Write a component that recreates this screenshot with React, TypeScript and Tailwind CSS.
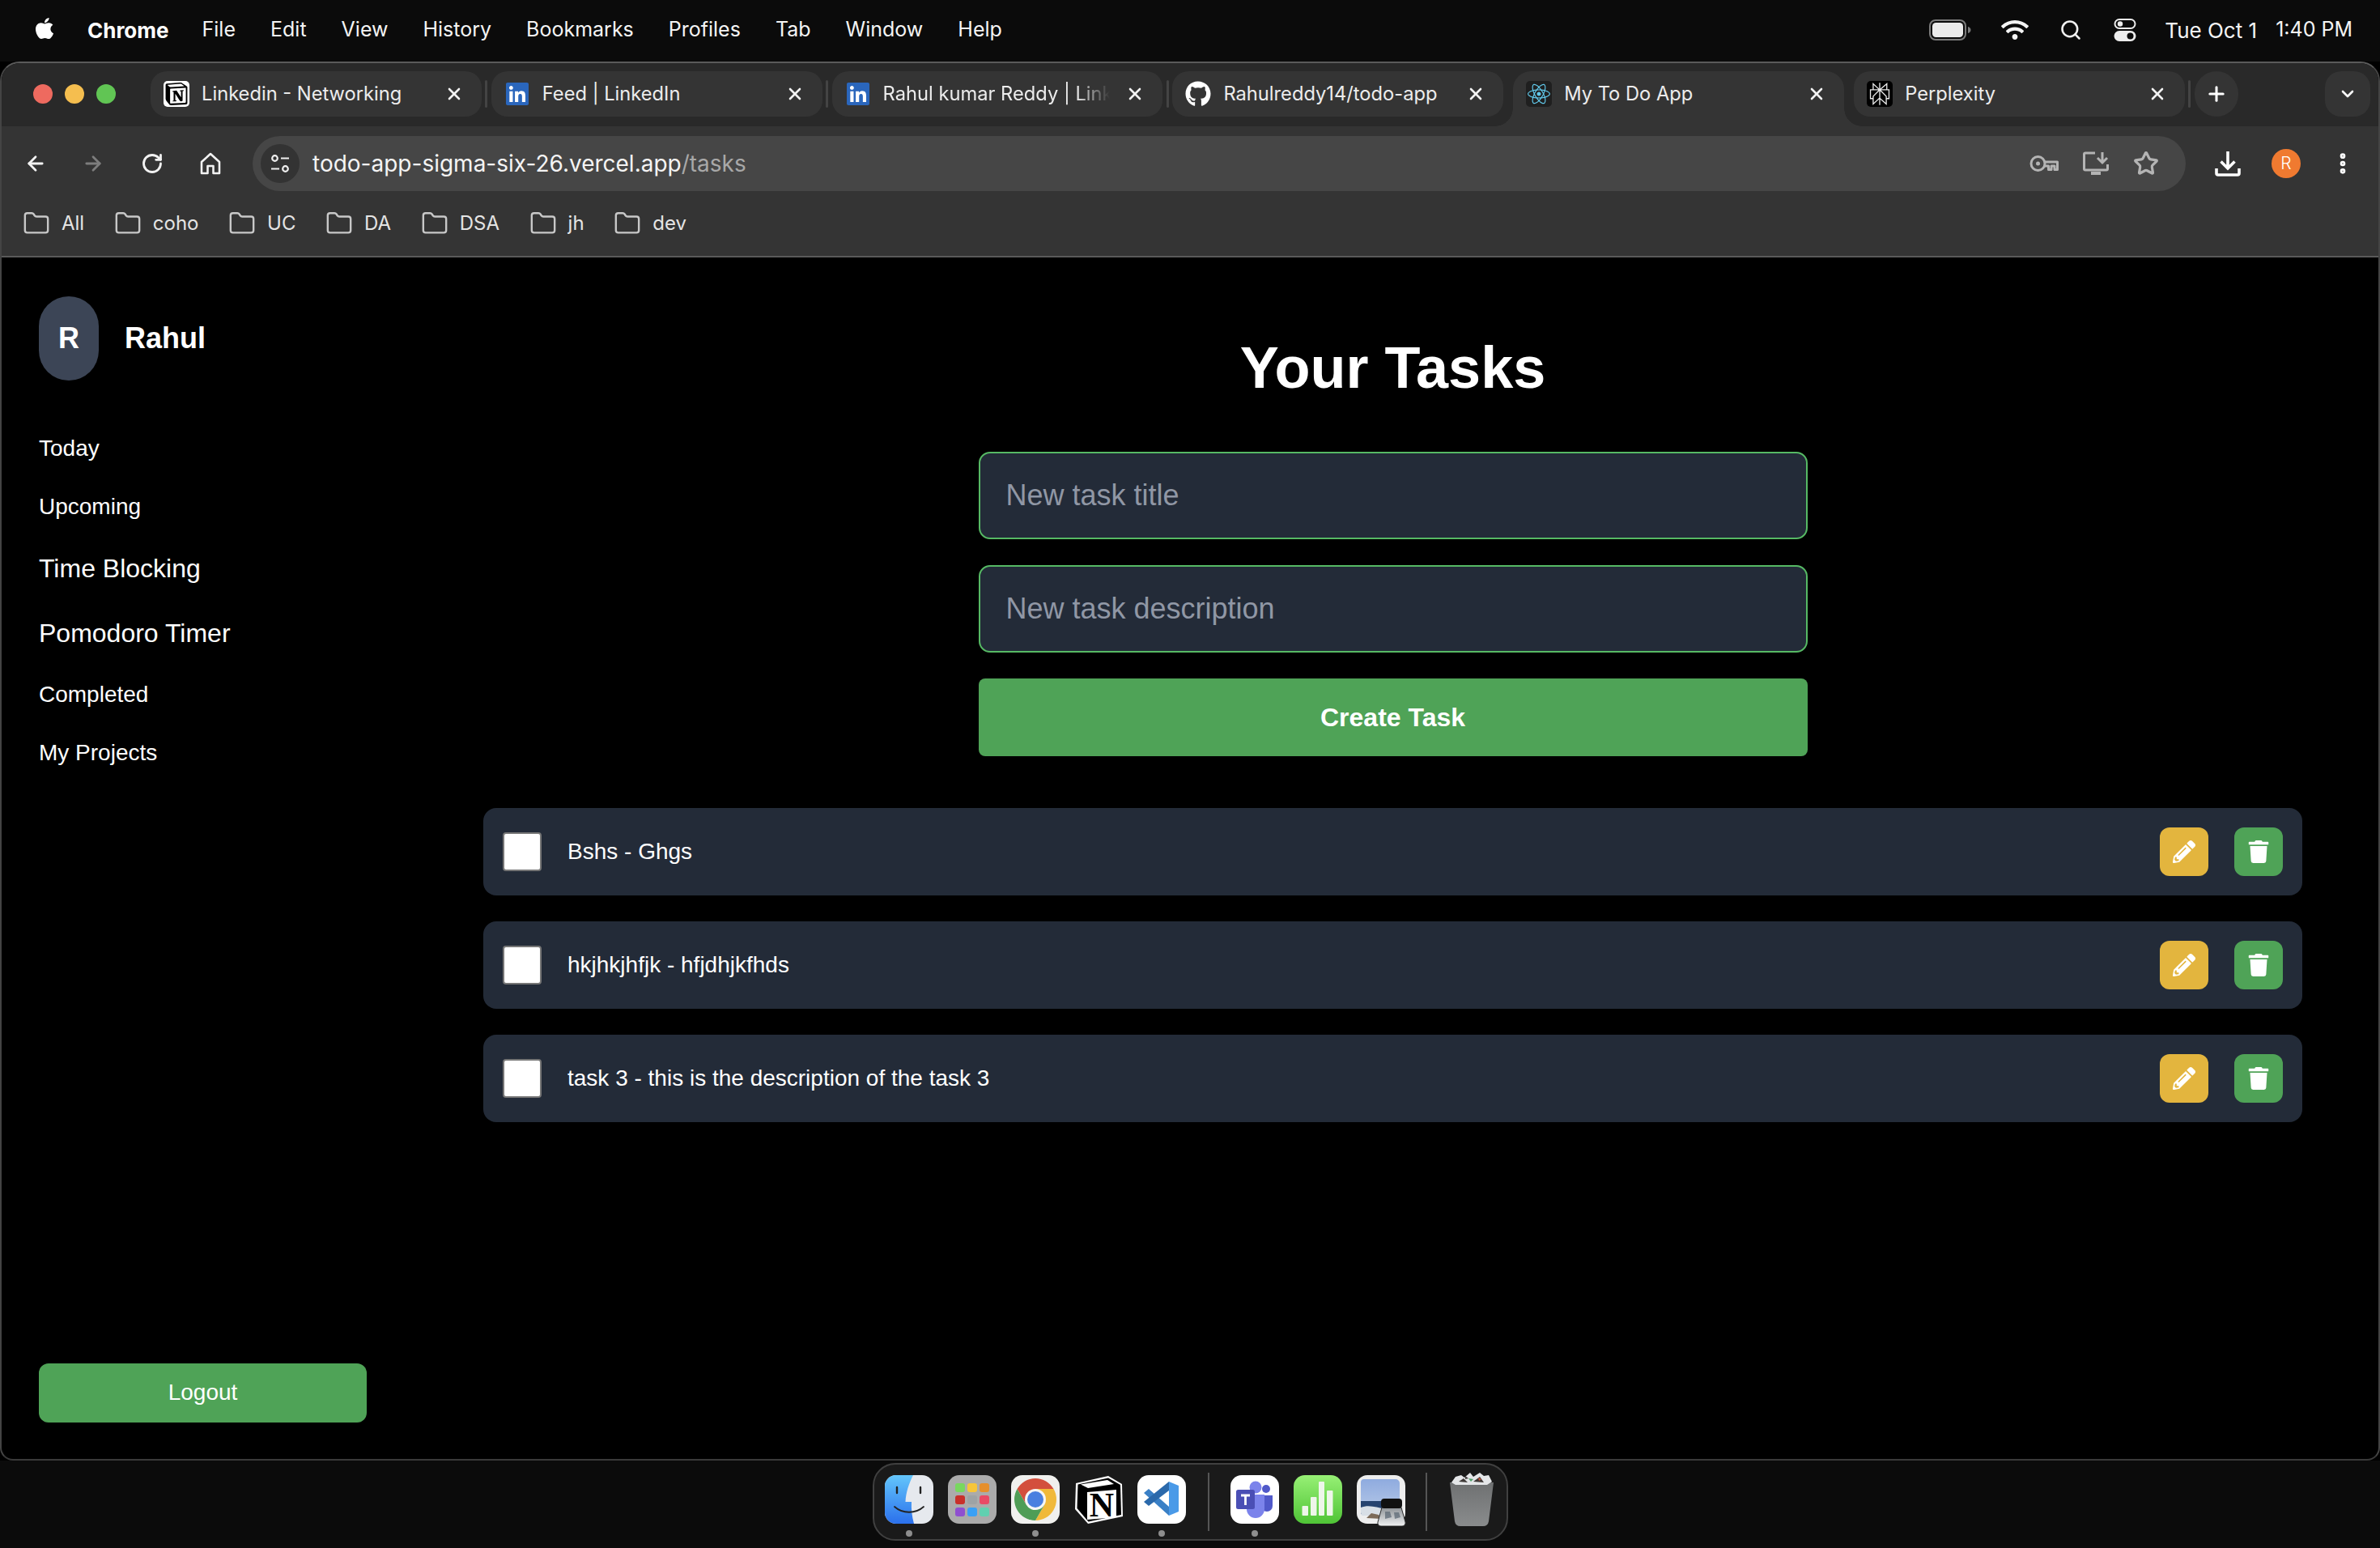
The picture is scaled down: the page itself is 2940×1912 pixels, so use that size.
import type { ReactNode } from 'react'
import {
  ArrowLeft,
  ArrowRight,
  ChevronDown,
  EllipsisVertical,
  Folder,
  Plus,
  RotateCw,
  Search,
  Star,
  X,
} from 'lucide-react'
import { FaApple, FaGithub, FaLinkedin, FaPencilAlt, FaReact, FaTrash, FaWifi } from 'react-icons/fa'
import { SiNotion, SiPerplexity } from 'react-icons/si'

const menuItems = ['File', 'Edit', 'View', 'History', 'Bookmarks', 'Profiles', 'Tab', 'Window', 'Help']
const bookmarks = ['All', 'coho', 'UC', 'DA', 'DSA', 'jh', 'dev']
const tasks = ['Bshs - Ghgs', 'hkjhkjhfjk - hfjdhjkfhds', 'task 3 - this is the description of the task 3']

function LinkedinIcon() {
  return (
    <div className="relative flex size-8 items-center justify-center">
      <div className="absolute size-6 bg-white" />
      <FaLinkedin className="relative size-8 text-[#2a66bc]" />
    </div>
  )
}

function Tab({ icon, title, fade }: { icon: ReactNode; title: string; fade?: boolean }) {
  return (
    <div className="flex h-14 w-[408.8px] shrink-0 items-center rounded-[20px] bg-[#343434] pl-4 pr-[22px]">
      <div className="flex size-8 shrink-0 items-center justify-center">{icon}</div>
      <span
        className={
          fade
            ? 'ml-[15px] w-[280px] overflow-hidden whitespace-nowrap text-[23.7px] text-[#ececec] [mask-image:linear-gradient(to_right,black_85%,transparent)]'
            : 'ml-[15px] w-[280px] overflow-hidden whitespace-nowrap text-[23.7px] text-[#ececec]'
        }
      >
        {title}
      </span>
      <X className="ml-auto size-6 shrink-0 text-[#f2f2f2]" strokeWidth={2.6} />
    </div>
  )
}

function TabSeparator({ show = true }: { show?: boolean }) {
  return (
    <div className="flex h-14 w-3 shrink-0 items-center justify-center">
      {show && <div className="h-[34px] w-[3px] rounded-full bg-[#444444]" />}
    </div>
  )
}

function ActiveTab() {
  return (
    <div className="relative flex h-[68px] w-[409px] shrink-0 items-start rounded-t-[22px] bg-[#343434] pl-[16px] pr-[22px] pt-3">
      <div className="absolute bottom-0 -left-[22px] size-[22px] bg-[radial-gradient(circle_at_0_0,transparent_21.5px,#343434_22px)]" />
      <div className="absolute bottom-0 -right-[22px] size-[22px] bg-[radial-gradient(circle_at_100%_0,transparent_21.5px,#343434_22px)]" />
      <div className="flex size-8 shrink-0 items-center justify-center rounded-[5px] bg-[#1f1f1f]">
        <FaReact className="size-7 text-[#61c8ea]" />
      </div>
      <span className="ml-[15px] whitespace-nowrap text-[23.7px] leading-8 text-[#ececec]">My To Do App</span>
      <X className="ml-auto mt-1 size-6 shrink-0 text-[#f2f2f2]" strokeWidth={2.6} />
    </div>
  )
}

function MenuBar() {
  return (
    <div className="flex h-[76px] shrink-0 items-center bg-[#0b0b0b] pb-[2px] pl-[40px] pr-[34px] text-[25px] text-[#f4f4f4]">
      <FaApple className="mb-1 size-[30px] text-white" />
      <span className="ml-[38px] text-[26px] font-bold text-white">Chrome</span>
      <div className="ml-[41px] flex gap-[43px]">
        {menuItems.map((item) => (
          <span key={item}>{item}</span>
        ))}
      </div>
      <div className="ml-auto flex items-center">
        <svg width="52" height="26" viewBox="0 0 52 26">
          <rect x="1" y="1" width="44" height="24" rx="7" fill="none" stroke="#7b7b7b" strokeWidth="2" />
          <rect x="4" y="4" width="38" height="18" rx="4.5" fill="#ebebeb" />
          <path d="M48 9c2 .6 3.5 2 3.5 4s-1.500 3.400-3.500 4z" fill="#7b7b7b" />
        </svg>
        <FaWifi className="ml-[37px] size-[34px] text-[#f4f4f4]" />
        <Search className="ml-[38px] size-[28px] text-[#f0f0f0]" strokeWidth={2.2} />
        <svg className="ml-[39px]" width="28" height="28" viewBox="0 0 28 28">
          <rect x="1.500" y="1" width="25" height="11" rx="5.500" fill="none" stroke="#ededed" strokeWidth="2" />
          <circle cx="8" cy="6.500" r="3.200" fill="#ededed" />
          <rect x="0.500" y="15" width="27" height="13" rx="6.500" fill="#ededed" />
          <circle cx="20.500" cy="21.500" r="4" fill="#0b0b0b" />
        </svg>
        <span className="ml-[35px] text-[26px]">Tue Oct 1</span>
        <span className="ml-[23px]">1:40 PM</span>
      </div>
    </div>
  )
}

function TabStrip() {
  return (
    <div className="flex h-[78px] shrink-0 items-start bg-[#292929] pt-[10px]">
      <div className="ml-[39px] flex h-14 w-[145px] shrink-0 items-center gap-[15px]">
        <div className="size-6 rounded-full bg-[#ee6a5f]" />
        <div className="size-6 rounded-full bg-[#f5be4f]" />
        <div className="size-6 rounded-full bg-[#61c554]" />
      </div>
      <Tab
        title="Linkedin - Networking"
        icon={
          <div className="flex size-8 items-center justify-center rounded-[5px] bg-white">
            <SiNotion className="size-7 text-black" />
          </div>
        }
      />
      <TabSeparator />
      <Tab title="Feed | LinkedIn" icon={<LinkedinIcon />} />
      <TabSeparator />
      <Tab title="Rahul kumar Reddy | LinkedIn" fade icon={<LinkedinIcon />} />
      <TabSeparator />
      <Tab title="Rahulreddy14/todo-app" icon={<FaGithub className="size-8 text-white" />} />
      <TabSeparator show={false} />
      <ActiveTab />
      <TabSeparator show={false} />
      <Tab
        title="Perplexity"
        icon={
          <div className="flex size-8 items-center justify-center rounded-[5px] bg-black">
            <SiPerplexity className="size-7 text-[#e8e8e8]" />
          </div>
        }
      />
      <TabSeparator />
      <div className="flex h-14 w-[54px] shrink-0 items-center justify-center rounded-full bg-[#343434]">
        <Plus className="size-7 text-white" strokeWidth={2.6} />
      </div>
      <div className="ml-auto mr-[10px] flex h-14 w-14 shrink-0 items-center justify-center rounded-[20px] bg-[#343434]">
        <ChevronDown className="size-6 text-white" strokeWidth={2.6} />
      </div>
    </div>
  )
}

function NavRow() {
  return (
    <div className="flex h-[92px] shrink-0 items-center pl-[28px]">
      <ArrowLeft className="size-7 text-[#f2f2f2]" strokeWidth={2.4} />
      <ArrowRight className="ml-[43px] size-7 text-[#7d7d7d]" strokeWidth={2.4} />
      <RotateCw className="ml-[45px] size-7 text-[#f2f2f2]" strokeWidth={2.4} />
      <svg className="ml-[44px]" width="28" height="28" viewBox="0 0 28 28" fill="none" stroke="#f2f2f2" strokeWidth="2.600">
        <path d="M3 12 14 2l11 10v14h-7.500v-9h-7v9H3z" strokeLinejoin="round" />
      </svg>
      <div className="ml-[38px] flex h-[68px] w-[2388px] shrink-0 items-center rounded-full bg-[#464646] pl-[10px] pr-[33px]">
        <div className="flex size-12 items-center justify-center rounded-full bg-[#333333]">
          <svg width="26" height="26" viewBox="0 0 26 26" fill="none" stroke="#f0f0f0" strokeWidth="2.200">
            <circle cx="6.500" cy="6.500" r="3.300" />
            <path d="M14 6.500h10M2 19.500h10" />
            <circle cx="19.500" cy="19.500" r="3.300" />
          </svg>
        </div>
        <span className="ml-4 text-[28px] text-[#f4f4f4]">
          todo-app-sigma-six-26.vercel.app<span className="text-[#a8a8a8]">/tasks</span>
        </span>
        <div className="ml-auto flex items-center gap-[30px]">
          <svg width="36" height="22" viewBox="0 0 36 22" fill="none" stroke="#b4b4b4" strokeWidth="3">
            <circle cx="10.500" cy="11" r="8.500" />
            <circle cx="10.500" cy="11" r="2.500" fill="#b4b4b4" stroke="none" />
            <path d="M19 9h15.500v9.500h-3.500V14h-4v4.500h-3.500V14H19" strokeLinejoin="round" />
          </svg>
          <svg width="32" height="30" viewBox="0 0 32 30" fill="none" stroke="#b4b4b4" strokeWidth="3">
            <path d="M15 2H3a1.500 1.500 0 0 0-1.500 1.500v18A1.500 1.500 0 0 0 3 23h26a1.500 1.500 0 0 0 1.500-1.500V16" />
            <path d="M10 25h12v4H10z" fill="#b4b4b4" stroke="none" />
            <path d="M24 1v13m-6-6 6 6 6-6" />
          </svg>
          <Star className="size-[32px] text-[#b4b4b4]" strokeWidth={2.4} />
        </div>
      </div>
      <svg className="ml-[36px]" width="32" height="32" viewBox="0 0 32 32" fill="none" stroke="#ffffff" strokeWidth="3.600">
        <path d="M16 1v20M7.500 13.500 16 22l8.500-8.500" />
        <path d="M2 22v6a2 2 0 0 0 2 2h24a2 2 0 0 0 2-2v-6" />
      </svg>
      <div className="ml-[38px] flex size-9 items-center justify-center rounded-full bg-[#f07a30] text-[21px] font-light text-white">R</div>
      <EllipsisVertical className="ml-[36px] size-8 text-white" strokeWidth={3} />
    </div>
  )
}

function BookmarksBar() {
  return (
    <div className="flex h-[68px] shrink-0 items-start gap-[36.6px] pl-[26px] pt-[4px]">
      {bookmarks.map((name) => (
        <div key={name} className="flex h-12 items-center gap-[14px]">
          <Folder className="size-[34px] text-[#c8c8c8]" strokeWidth={1.700} />
          <span className="text-[24px] text-[#e4e4e4]">{name}</span>
        </div>
      ))}
    </div>
  )
}

function Sidebar() {
  return (
    <aside className="flex w-[498px] shrink-0 flex-col pb-[45px] pl-[46px] pr-[47px] pt-12">
      <div className="flex items-center gap-[32px]">
        <div className="flex h-[104px] w-[74px] items-center justify-center rounded-full bg-[#3c4556] text-[36px] font-bold">R</div>
        <span className="text-[36px] font-bold">Rahul</span>
      </div>
      <nav className="mt-[63px] flex flex-col gap-[30px]">
        <a className="h-[42px] text-[28px] leading-[42px]">Today</a>
        <a className="h-[42px] text-[28px] leading-[42px]">Upcoming</a>
        <a className="h-[50px] text-[32px] leading-[50px]">Time Blocking</a>
        <a className="h-[50px] text-[32px] leading-[50px]">Pomodoro Timer</a>
        <a className="h-[42px] text-[28px] leading-[42px]">Completed</a>
        <a className="h-[42px] text-[28px] leading-[42px]">My Projects</a>
      </nav>
      <button className="mt-auto h-[73px] w-full rounded-xl bg-[#4fa357] pb-[2px] text-[28px] text-white">Logout</button>
    </aside>
  )
}

function TaskRow({ text }: { text: string }) {
  return (
    <div className="flex h-[108px] items-center rounded-2xl bg-[#232b38] px-6">
      <input type="checkbox" readOnly className="size-12 appearance-none rounded-[4px] border-2 border-[#767676] bg-white" />
      <span className="ml-[32px] text-[28px]">{text}</span>
      <div className="ml-auto flex gap-8">
        <button className="flex size-[60px] items-center justify-center rounded-xl bg-[#e3b53e]">
          <FaPencilAlt className="size-7 text-white" />
        </button>
        <button className="flex size-[60px] items-center justify-center rounded-xl bg-[#4fa357]">
          <FaTrash className="size-7 text-white" />
        </button>
      </div>
    </div>
  )
}

function Main() {
  return (
    <main className="flex flex-1 flex-col items-center pl-[97px] pr-[94px] pt-24">
      <h1 className="h-20 text-[72px] font-bold leading-[80px]">Your Tasks</h1>
      <div className="mt-16 flex w-[1024px] flex-col gap-8">
        <input
          placeholder="New task title"
          className="h-[108px] rounded-[14px] border-2 border-[#56b964] bg-[#232b38] px-8 text-[36px] placeholder:text-[#9097a5]"
        />
        <input
          placeholder="New task description"
          className="h-[108px] rounded-[14px] border-2 border-[#56b964] bg-[#232b38] px-8 text-[36px] placeholder:text-[#9097a5]"
        />
        <button className="h-24 rounded-lg bg-[#4fa357] text-[32px] font-bold text-white">Create Task</button>
      </div>
      <div className="mt-16 flex w-full flex-col gap-8">
        {tasks.map((task) => (
          <TaskRow key={task} text={task} />
        ))}
      </div>
    </main>
  )
}

function DockItem({ running, children }: { running?: boolean; children: ReactNode }) {
  return (
    <div className="relative size-[60px] shrink-0">
      {children}
      {running && <div className="absolute -bottom-4 left-[26px] size-[8px] rounded-full bg-[#8e8e8e]" />}
    </div>
  )
}

function FinderIcon() {
  return (
    <svg width="60" height="60" viewBox="0 0 60 60">
      <defs>
        <linearGradient id="finderBlue" x1="0" y1="0" x2="0" y2="1">
          <stop offset="0" stopColor="#63c6fb" />
          <stop offset="1" stopColor="#2b70ec" />
        </linearGradient>
      </defs>
      <rect width="60" height="60" rx="14" fill="#e6e9ee" />
      <path d="M14 0h21c-5 10-9 21-9.500 33H33c-.5 9 .5 18 3 27H14A14 14 0 0 1 0 46V14A14 14 0 0 1 14 0z" fill="url(#finderBlue)" />
      <path d="M15 15v7M44 15v7" stroke="#222" strokeWidth="2.400" strokeLinecap="round" />
      <path d="M12 39c10 9 26 9 36 0" fill="none" stroke="#222" strokeWidth="1.800" strokeLinecap="round" />
    </svg>
  )
}

function LaunchpadIcon() {
  return (
    <div className="grid size-[60px] grid-cols-3 content-center justify-center gap-x-[3px] gap-y-[4px] rounded-[14px] bg-[#ababab] px-[9px]">
      <div className="h-[11px] rounded-[3px] bg-[#78d85f]" />
      <div className="h-[11px] rounded-[3px] bg-[#f6c53a]" />
      <div className="h-[11px] rounded-[3px] bg-[#e58f2c]" />
      <div className="h-[11px] rounded-[3px] bg-[#c9302a]" />
      <div className="h-[11px] rounded-[3px] bg-[#9ea3a5]" />
      <div className="h-[11px] rounded-[3px] bg-[#e84a66]" />
      <div className="h-[11px] rounded-[3px] bg-[#8f4fd0]" />
      <div className="h-[11px] rounded-[3px] bg-[#3aa0f5]" />
      <div className="h-[11px] rounded-[3px] bg-[#61d0b0]" />
    </div>
  )
}

function ChromeIcon() {
  return (
    <svg width="60" height="60" viewBox="0 0 60 60">
      <rect width="60" height="60" rx="14" fill="#f0f0ee" />
      <path d="M30 30V17h22.500A26 26 0 0 0 7.500 17l11.240 19.500z" fill="#d34f3d" />
      <path d="M30 30V17h22.500A26 26 0 0 1 30 56l11.260-19.500z" fill="#f0b93a" />
      <path d="M30 30l11.260 6.500L30 56A26 26 0 0 1 7.500 17l11.240 19.500z" fill="#4f9d56" />
      <circle cx="30" cy="30" r="13" fill="#f6f6f6" />
      <circle cx="30" cy="30" r="10" fill="#4a7fe0" />
    </svg>
  )
}

function NotionIcon() {
  return (
    <svg width="60" height="60" viewBox="0 0 60 60">
      <path d="M2 10 42 1l17 10 1 40-43 9L1 42z" fill="#ffffff" />
      <path d="M4.500 11.500 42 3.500 57 12l1 37-40.500 8.500L3.500 41z" fill="#000000" />
      <path d="M8 11.500 41 6l8 5-32 5z" fill="#ffffff" />
      <path d="M16 21l36-3v34l-36 3z" fill="#ffffff" />
      <text x="34" y="51" textAnchor="middle" fontFamily="'Liberation Serif',serif" fontWeight="700" fontSize="42" fill="#000000">N</text>
    </svg>
  )
}

function VsCodeIcon() {
  return (
    <svg width="60" height="60" viewBox="0 0 60 60">
      <rect width="60" height="60" rx="14" fill="#ffffff" />
      <path d="M8 22l6-5 25 22v11z" fill="#3a80c6" />
      <path d="M39 8v11L14 38l-6-5z" fill="#2b69ab" />
      <path d="M39 8l12 5v32l-12 5z" fill="#4a9ae8" />
    </svg>
  )
}

function TeamsIcon() {
  return (
    <svg width="60" height="60" viewBox="0 0 60 60">
      <rect width="60" height="60" rx="14" fill="#ffffff" />
      <circle cx="44" cy="17" r="5" fill="#5059c9" />
      <path d="M38 25h14v13a7 7 0 0 1-14 0z" fill="#5059c9" />
      <circle cx="31" cy="15" r="7.500" fill="#7b83eb" />
      <path d="M20 24h22v18a11 11 0 0 1-22 0z" fill="#7b83eb" />
      <rect x="7" y="18" width="23" height="24" rx="2.500" fill="#4a4fb5" />
      <path d="M13 25h11M18.500 25v12" stroke="#ffffff" strokeWidth="2.800" />
    </svg>
  )
}

function NumbersIcon() {
  return (
    <svg width="60" height="60" viewBox="0 0 60 60">
      <defs>
        <linearGradient id="numbersGreen" x1="0" y1="0" x2="0" y2="1">
          <stop offset="0" stopColor="#97f075" />
          <stop offset="1" stopColor="#4fc436" />
        </linearGradient>
      </defs>
      <rect width="60" height="60" rx="14" fill="url(#numbersGreen)" />
      <rect x="10.500" y="38" width="7.500" height="12" rx="1" fill="#eef6ea" />
      <rect x="21" y="27" width="7.500" height="23" rx="1" fill="#eef6ea" />
      <rect x="31" y="8" width="7" height="42" rx="1" fill="#eef6ea" />
      <rect x="41" y="19" width="7.500" height="31" rx="1" fill="#eef6ea" />
    </svg>
  )
}

function PreviewIcon() {
  return (
    <div className="relative size-[60px]">
      <svg width="60" height="60" viewBox="0 0 60 60">
        <defs>
          <linearGradient id="previewSky" x1="0" y1="0" x2="0" y2="1">
            <stop offset="0" stopColor="#8fabdf" />
            <stop offset="1" stopColor="#b9cbe8" />
          </linearGradient>
        </defs>
        <rect width="60" height="60" rx="13" fill="#eeeeee" />
        <path d="M9 5h39a5 5 0 0 1 5 5v40H9a4 4 0 0 1-4-4V9a4 4 0 0 1 4-4z" fill="url(#previewSky)" />
        <path d="M5 32h48v16H5z" fill="#26436f" />
        <path d="M5 40c10-4 20 0 30 2v8H9a4 4 0 0 1-4-4z" fill="#d8dfe6" />
        <path d="M12 53l6-6 9 2 4 5z" fill="#7c6a58" />
      </svg>
      <svg className="absolute -bottom-[3px] -right-[1px]" width="36" height="34" viewBox="0 0 36 34">
        <defs>
          <linearGradient id="jarGlass" x1="0" y1="0" x2="0" y2="1">
            <stop offset="0" stopColor="#8f9498" />
            <stop offset="1" stopColor="#f0f1f2" />
          </linearGradient>
        </defs>
        <path d="M6 11h24l5 18a4 4 0 0 1-4 5H5a4 4 0 0 1-4-5z" fill="url(#jarGlass)" stroke="#2c2c2c" strokeWidth="1" />
        <path d="M10 16h6l2 7-8 2zM21 17h6l2 6-7 2z" fill="#5d6975" opacity=".75" />
        <rect x="5" y="0" width="26" height="12" rx="4" fill="#111111" />
      </svg>
    </div>
  )
}

function TrashIcon() {
  return (
    <svg width="54" height="68" viewBox="0 0 54 68">
      <defs>
        <linearGradient id="trashGrey" x1="0" y1="0" x2="0" y2="1">
          <stop offset="0" stopColor="#6f7172" />
          <stop offset="1" stopColor="#8a8c8d" />
        </linearGradient>
      </defs>
      <path d="M0 13h54l-6 48q-1 6-7 6H13q-6 0-7-6z" fill="url(#trashGrey)" />
      <path d="M2 13 7 6l7-2 4 3 7-6 4 5 8-5 5 4 6-1 4 8-6 4H7z" fill="#e4e6e8" />
      <path d="M11 12l6-4 5 5zM29 12l8-6 5 7zM19 5l4 3-4 1z" fill="#3f3a38" />
      <path d="M23 8l6 1-3 3z" fill="#4f9e68" />
      <path d="M35 7l4 2-3 2z" fill="#c9553e" />
    </svg>
  )
}

function Dock() {
  return (
    <div className="flex flex-1 items-start justify-center bg-[#0b0b0b] pt-[3px]">
      <div className="flex h-24 items-start rounded-[28px] border-2 border-[#404040] bg-[#1a1a1a] pl-[13px] pr-[16px] pt-[13px]">
        <div className="flex gap-[18px]">
          <DockItem running><FinderIcon /></DockItem>
          <DockItem><LaunchpadIcon /></DockItem>
          <DockItem running><ChromeIcon /></DockItem>
          <DockItem><NotionIcon /></DockItem>
          <DockItem running><VsCodeIcon /></DockItem>
        </div>
        <div className="ml-[27px] mr-[26px] mt-[-3px] h-[72px] w-[2px] bg-[#555555]" />
        <div className="flex gap-[18px]">
          <DockItem running><TeamsIcon /></DockItem>
          <DockItem><NumbersIcon /></DockItem>
          <DockItem><PreviewIcon /></DockItem>
        </div>
        <div className="ml-[25px] mr-[28px] mt-[-3px] h-[72px] w-[2px] bg-[#555555]" />
        <div className="mt-[-4px]">
          <TrashIcon />
        </div>
      </div>
    </div>
  )
}

export default function App() {
  return (
    <div className="flex h-[1912px] w-[2940px] flex-col overflow-hidden bg-black font-['Inter',sans-serif] text-white">
      <MenuBar />
      <div className="flex h-[1728px] shrink-0 flex-col overflow-hidden rounded-t-[24px] rounded-b-[16px] border-2 border-[#5a5a5a] border-x-[#444444] border-b-[#3a3a3a] bg-black">
        <TabStrip />
        <div className="flex h-[160px] shrink-0 flex-col bg-[#343434]">
          <NavRow />
          <BookmarksBar />
        </div>
        <div className="h-[2px] shrink-0 bg-[#5a5a5a]" />
        <div className="flex flex-1 font-['Liberation_Sans',Arial,sans-serif]">
          <Sidebar />
          <Main />
        </div>
      </div>
      <Dock />
    </div>
  )
}
